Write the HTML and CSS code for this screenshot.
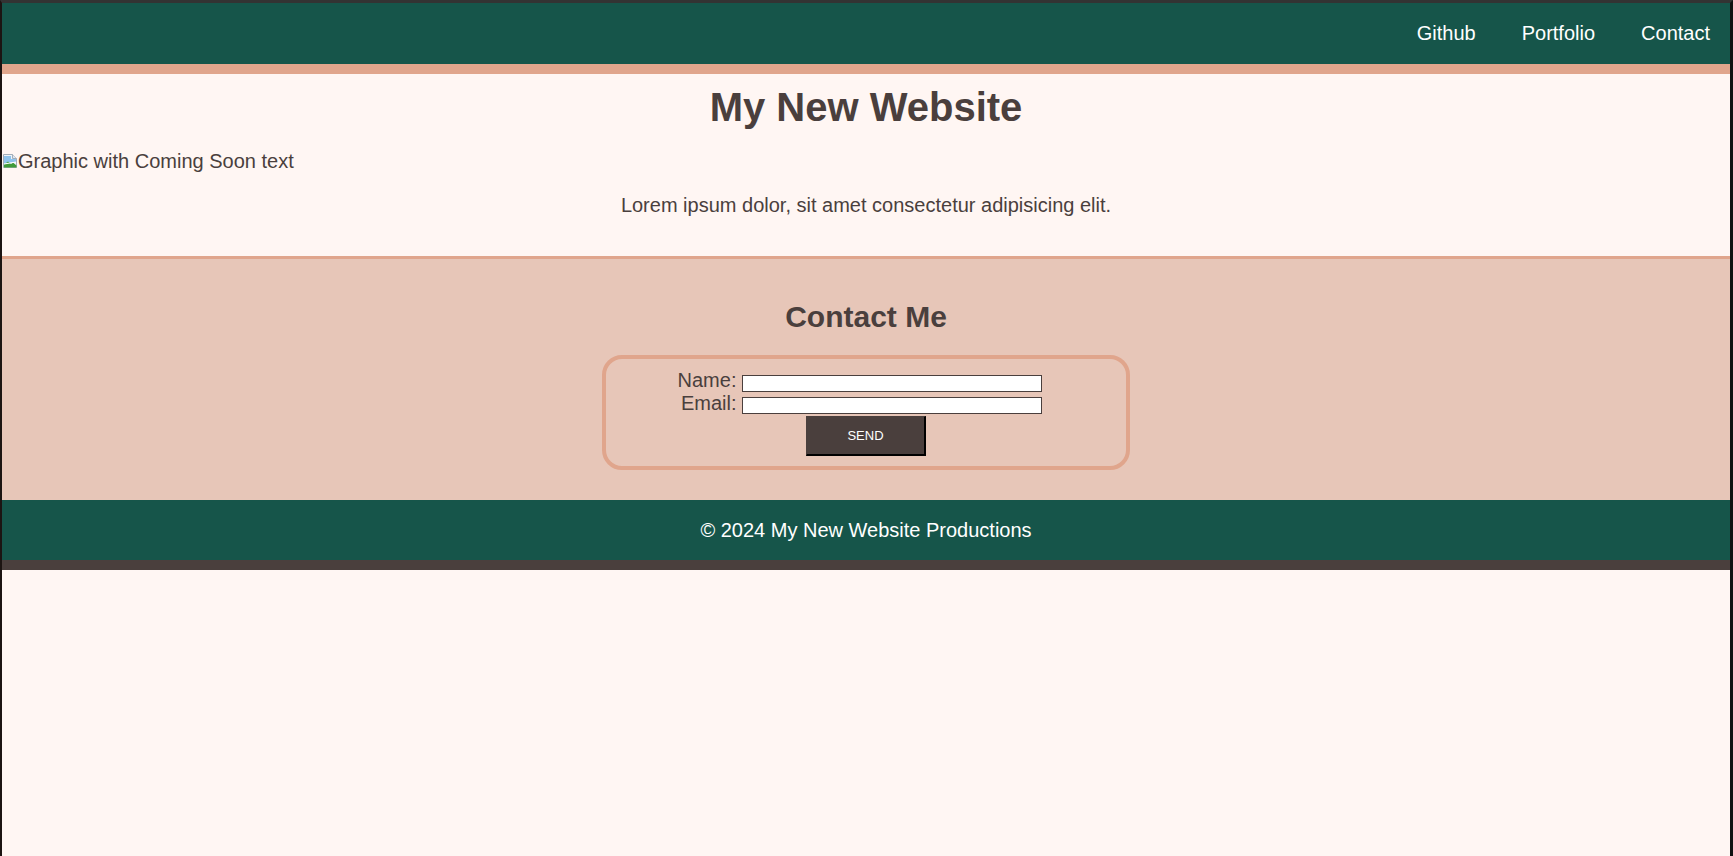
FILE: index.html
```html
<!DOCTYPE html>
<html lang="en">
<head>
    <meta charset="UTF-8">
    <meta name="viewport" content="width=device-width, initial-scale=1.0">
    <title>My New Website</title>
    <link rel="stylesheet" href="styles.css">
</head>
<body>
    <header class="site-nav">
        <a href="#">Github</a>
        <a href="#">Portfolio</a>
        <a href="#contact">Contact</a>
    </header>

    <main class="intro">
        <h1>My New Website</h1>
        <!-- image is missing, so only its alt text shows -->
        <div class="hero">
            <span class="broken-img">
                <svg width="16" height="16" viewBox="0 0 16 16">
                    <path d="M1.5 1.5h9l4 4v9h-13z" fill="#eef3f8" stroke="#a3adb8"/>
                    <path d="M10.5 1.5v4h4" fill="#dfe6ee" stroke="#a3adb8"/>
                    <path d="M2 3h7v3h5v3l-3 1-9 1z" fill="#8fc3ec"/>
                    <path d="M2 14.5v-3l4-3 3 2.5 2-1.5 3.5 3v2z" fill="#3f9b3a"/>
                    <path d="M2 11l12-2" stroke="#fff" stroke-width="1.2"/>
                </svg>Graphic with Coming Soon text</span>
        </div>
        <p>Lorem ipsum dolor, sit amet consectetur adipisicing elit.</p>
    </main>

    <section class="contact" id="contact">
        <h2>Contact Me</h2>
        <form class="contact-form">
            <div class="fields">
                <label for="name">Name:</label>
                <input type="text" id="name">
                <label for="email">Email:</label>
                <input type="email" id="email">
            </div>
            <div class="actions">
                <button type="button">SEND</button>
            </div>
        </form>
    </section>

    <footer class="site-footer">
        <p>&copy; 2024 My New Website Productions</p>
    </footer>
</body>
</html>
```

FILE: styles.css
```css
html {
    background-color: #1c1614;
}

body {
    font-family: "Liberation Sans", Arial, sans-serif;
    font-size: 20px;
    line-height: 23px;
    color: #4a3f3d;
    background-color: #fff6f3;
    margin: 0;
    min-height: 100vh;
    box-sizing: border-box;
    border-top: 3px solid #333333;
    border-left: 2px solid #1c1412;
    border-right: 3px solid #111111;
}

.site-nav {
    background-color: #16554a;
    height: 61px;
    border-bottom: 10px solid #e0a58c;
    display: flex;
    justify-content: flex-end;
    align-items: center;
    gap: 46px;
    padding-right: 20px;
}

.site-nav a {
    color: white;
    text-decoration: none;
}

.intro {
    text-align: center;
    padding: 10px 0 39px;
}

.intro h1 {
    font-size: 40px;
    line-height: 46px;
    margin: 0 0 20px;
}

.hero {
    text-align: left;
}

.broken-img svg {
    vertical-align: -1px;
}

.intro p {
    margin: 21px 0 0;
}

.contact {
    background-color: #e7c6b8;
    border-top: 3px solid #e0a58c;
    padding: 41px 0 30px;
    text-align: center;
}

.contact h2 {
    font-size: 30px;
    line-height: 34px;
    margin: 0 0 21px;
}

.contact-form {
    width: 528px;
    box-sizing: border-box;
    margin: 0 auto;
    border: 4px solid #e0a58c;
    border-radius: 20px;
    padding: 10px 0 10px;
}

.fields {
    display: grid;
    grid-template-columns: auto 300px;
    grid-template-rows: 23px 22px;
    column-gap: 6px;
    justify-content: center;
    padding-right: 12px;
}

.fields label {
    text-align: right;
}

.fields input {
    align-self: end;
    width: 300px;
    height: 17px;
    box-sizing: border-box;
    border: 1px solid #4a3f3d;
    background: white;
    margin: 0;
    padding: 0 2px;
}

.actions {
    display: flex;
    justify-content: center;
    margin-top: 2px;
}

.actions button {
    width: 120px;
    height: 40px;
    background-color: #4a3f3d;
    color: white;
    font-family: "Liberation Sans", Arial, sans-serif;
    font-size: 13px;
    border-style: solid;
    border-width: 1px 2px 2px 1px;
    border-color: #4a3f3d #000 #000 #4a3f3d;
    cursor: pointer;
}

.site-footer {
    background-color: #16554a;
    color: white;
    height: 60px;
    border-bottom: 10px solid #4a3f3d;
    display: flex;
    align-items: center;
    justify-content: center;
}

.site-footer p {
    margin: 0;
}
```
